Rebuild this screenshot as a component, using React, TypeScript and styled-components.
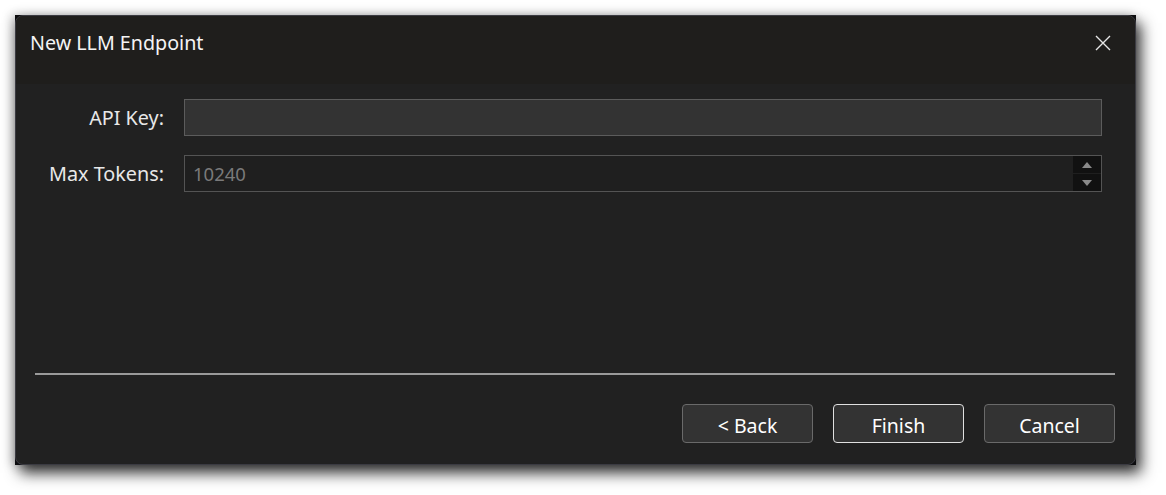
import styled, { createGlobalStyle } from 'styled-components';

const GlobalStyle = createGlobalStyle`
  html, body {
    margin: 0;
    padding: 0;
    background: #ffffff;
  }
  body {
    font-family: 'Noto Sans', 'Open Sans', sans-serif;
  }
`;

const Page = styled.div`
  padding: 15px 30px 30px 15px;
`;

const Frame = styled.div`
  width: 1121px;
  height: 450px;
  background: #0c0c0e;
  box-shadow: 5px 8px 14px rgba(0, 0, 0, 0.8), -3px 0 10px rgba(0, 0, 0, 0.25);
`;

const Window = styled.div`
  box-sizing: border-box;
  display: flex;
  flex-direction: column;
  width: 100%;
  height: 100%;
  background: #212121;
  border: 1px solid #3b3b42;
  border-radius: 8px;
  overflow: hidden;
  color: #f2f2f2;
`;

const TitleBar = styled.div`
  display: flex;
  align-items: flex-start;
  justify-content: space-between;
  height: 68px;
  padding: 13px 20px 0 14px;
  box-sizing: border-box;
  background: #1f1e1c;
`;

const Title = styled.div`
  font-size: 19.7px;
  line-height: 28px;
  color: #f4f4f4;
`;

const CloseButton = styled.button`
  display: flex;
  align-items: center;
  justify-content: center;
  width: 24px;
  height: 24px;
  margin-top: 2px;
  padding: 0;
  background: transparent;
  border: none;
`;

const Form = styled.div`
  display: grid;
  grid-template-columns: 149px 1fr;
  column-gap: 19px;
  row-gap: 19px;
  padding: 15px 33px 0 0;
`;

const Label = styled.label`
  display: flex;
  align-items: center;
  justify-content: flex-end;
  height: 37px;
  padding-right: 1px;
  font-size: 19.8px;
  color: #e8e8e8;
`;

const TextInput = styled.div<{ $disabled?: boolean }>`
  box-sizing: border-box;
  display: flex;
  align-items: center;
  height: 37px;
  padding-left: 8px;
  background: ${({ $disabled }) => ($disabled ? '#1f1f1f' : '#333333')};
  border: 1px solid ${({ $disabled }) => ($disabled ? '#545454' : '#5c5c5c')};
  font-size: 18.5px;
  color: #7a7a7a;
`;

const InputValue = styled.span`
  flex: 1;
`;

const Spinner = styled.div`
  display: flex;
  flex-direction: column;
  gap: 1px;
  width: 28px;
  height: 35px;
  background: #1f1f1f;
`;

const SpinButton = styled.div`
  flex: 1;
  display: flex;
  align-items: center;
  justify-content: center;
  background: #111111;
`;

const Spacer = styled.div`
  flex: 1;
`;

const Separator = styled.div`
  height: 2px;
  margin: 0 20px 0 19px;
  background: #9a9a9a;
`;

const Footer = styled.div`
  display: flex;
  justify-content: flex-end;
  gap: 20px;
  padding: 29px 20px 21px 0;
`;

const Button = styled.button<{ $default?: boolean }>`
  box-sizing: border-box;
  width: 131px;
  height: 39px;
  padding: 3px 0 0;
  background: #333333;
  border: 1px solid ${({ $default }) => ($default ? '#e0e0e0' : '#6a6a6a')};
  border-radius: 4px;
  color: #ffffff;
  font-family: 'Noto Sans', 'Open Sans', sans-serif;
  font-size: 19.5px;
`;

const Arrow = ({ up }: { up?: boolean }) => (
  <svg width="10" height="6" viewBox="0 0 10 6">
    <path d={up ? 'M0 6 L5 0 L10 6 Z' : 'M0 0 L5 6 L10 0 Z'} fill="#8a8a8a" />
  </svg>
);

const App = () => {
  return (
    <Page>
      <GlobalStyle />
      <Frame>
        <Window>
          <TitleBar>
            <Title>New LLM Endpoint</Title>
            <CloseButton aria-label="Close">
              <svg width="16" height="16" viewBox="0 0 16 16">
                <path d="M1 1 L15 15 M15 1 L1 15" stroke="#e6e6e6" strokeWidth="1.4" />
              </svg>
            </CloseButton>
          </TitleBar>
          <Form>
            <Label>API Key:</Label>
            <TextInput />
            <Label>Max Tokens:</Label>
            <TextInput $disabled>
              <InputValue>10240</InputValue>
              <Spinner>
                <SpinButton>
                  <Arrow up />
                </SpinButton>
                <SpinButton>
                  <Arrow />
                </SpinButton>
              </Spinner>
            </TextInput>
          </Form>
          <Spacer />
          <Separator />
          <Footer>
            <Button>&lt; Back</Button>
            <Button $default>Finish</Button>
            <Button>Cancel</Button>
          </Footer>
        </Window>
      </Frame>
    </Page>
  );
};

export default App;
